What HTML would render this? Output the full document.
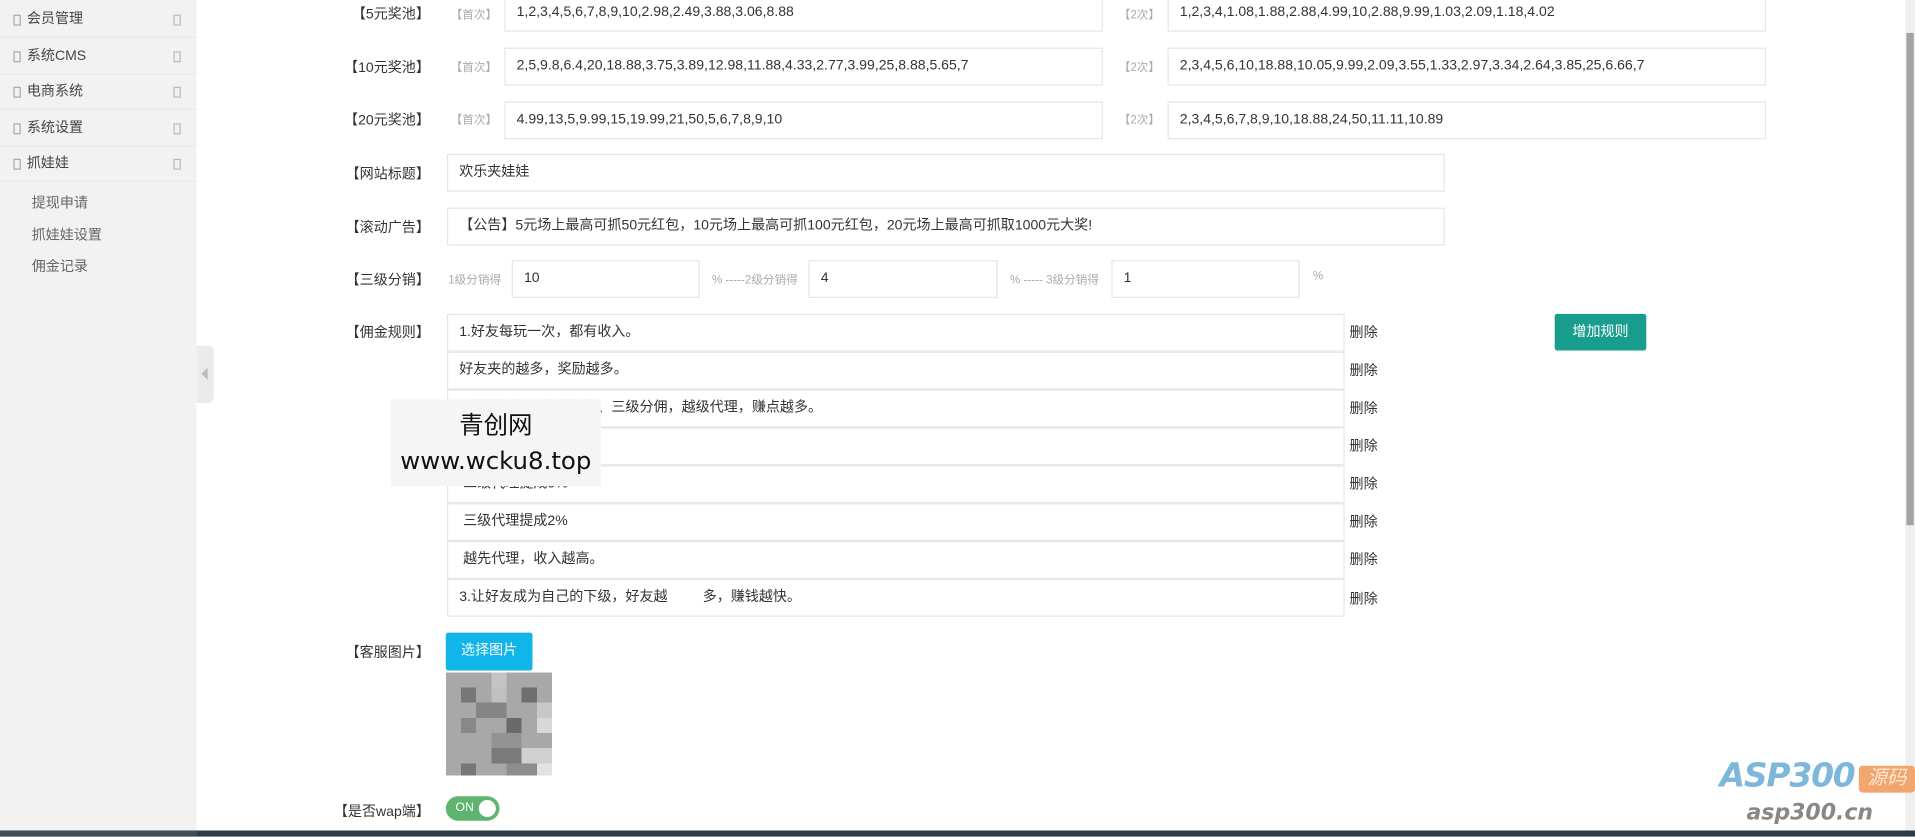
<!DOCTYPE html>
<html><head><meta charset="utf-8"><style>
*{margin:0;padding:0;box-sizing:border-box}
html,body{width:1915px;height:836px;overflow:hidden;background:#fff}
#w{position:absolute;left:0;top:0;width:1568px;height:685px;transform:scale(1.22130);transform-origin:0 0;font-family:"Liberation Sans","Noto Sans CJK SC",sans-serif;font-size:11.5px;color:#333}
.a{position:absolute}
.side{left:0;top:0;width:161px;height:685px;background:#f2f2f2}
.mi{position:absolute;left:0;width:161px;height:29px;border-bottom:1px solid #e9e9e9;line-height:29px}
.mi .ic{position:absolute;left:11px;top:10px;width:6px;height:9px;border:1px solid #aaa}
.mi .ir{position:absolute;left:142px;top:10px;width:6px;height:9px;border:1px solid #bbb}
.mi span{position:absolute;left:22px;color:#444}
.sub{position:absolute;left:26px;color:#666}
.lb{position:absolute;width:120px;text-align:right}
.in{position:absolute;border:1px solid #e6e6e6;height:31px;line-height:29px;padding-left:9px;background:#fff;white-space:nowrap;overflow:hidden}
.sm{position:absolute;color:#aaa;font-size:9.5px}
.del{position:absolute;left:1105px}
</style></head><body><div id="w">
<div class="a side">
<div class="mi" style="top:2px"><i class="ic"></i><span>会员管理</span><i class="ir"></i></div>
<div class="mi" style="top:32px"><i class="ic"></i><span>系统CMS</span><i class="ir"></i></div>
<div class="mi" style="top:61px"><i class="ic"></i><span>电商系统</span><i class="ir"></i></div>
<div class="mi" style="top:91px"><i class="ic"></i><span>系统设置</span><i class="ir"></i></div>
<div class="mi" style="top:120px"><i class="ic"></i><span>抓娃娃</span><i class="ir"></i></div>
<div class="sub" style="top:158px">提现申请</div>
<div class="sub" style="top:184px">抓娃娃设置</div>
<div class="sub" style="top:210px">佣金记录</div>
</div>
<div class="a" style="left:161px;top:283px;width:14px;height:47px;background:#ebebeb;border-radius:0 4px 4px 0"><div class="a" style="left:4px;top:18px;border-right:5px solid #bbb;border-top:5px solid transparent;border-bottom:5px solid transparent"></div></div>

<div class="lb" style="left:232px;top:3px">【5元奖池】</div>
<div class="sm" style="left:369px;top:4px">【首次】</div>
<div class="in" style="left:413px;top:-5px;width:490px">1,2,3,4,5,6,7,8,9,10,2.98,2.49,3.88,3.06,8.88</div>
<div class="sm" style="left:916px;top:4px">【2次】</div>
<div class="in" style="left:956px;top:-5px;width:490px">1,2,3,4,1.08,1.88,2.88,4.99,10,2.88,9.99,1.03,2.09,1.18,4.02</div>

<div class="lb" style="left:232px;top:47px">【10元奖池】</div>
<div class="sm" style="left:369px;top:47px">【首次】</div>
<div class="in" style="left:413px;top:39px;width:490px">2,5,9.8,6.4,20,18.88,3.75,3.89,12.98,11.88,4.33,2.77,3.99,25,8.88,5.65,7</div>
<div class="sm" style="left:916px;top:47px">【2次】</div>
<div class="in" style="left:956px;top:39px;width:490px">2,3,4,5,6,10,18.88,10.05,9.99,2.09,3.55,1.33,2.97,3.34,2.64,3.85,25,6.66,7</div>

<div class="lb" style="left:232px;top:90px">【20元奖池】</div>
<div class="sm" style="left:369px;top:90px">【首次】</div>
<div class="in" style="left:413px;top:83px;width:490px">4.99,13,5,9.99,15,19.99,21,50,5,6,7,8,9,10</div>
<div class="sm" style="left:916px;top:90px">【2次】</div>
<div class="in" style="left:956px;top:83px;width:490px">2,3,4,5,6,7,8,9,10,18.88,24,50,11.11,10.89</div>

<div class="lb" style="left:232px;top:134px">【网站标题】</div>
<div class="in" style="left:366px;top:126px;width:817px">欢乐夹娃娃</div>
<div class="lb" style="left:232px;top:178px">【滚动广告】</div>
<div class="in" style="left:366px;top:170px;width:817px">【公告】5元场上最高可抓50元红包，10元场上最高可抓100元红包，20元场上最高可抓取1000元大奖!</div>

<div class="lb" style="left:232px;top:221px">【三级分销】</div>
<div class="sm" style="left:367px;top:221px">1级分销得</div>
<div class="in" style="left:419px;top:213px;width:154px">10</div>
<div class="sm" style="left:583px;top:221px">% -----2级分销得</div>
<div class="in" style="left:662px;top:213px;width:155px">4</div>
<div class="sm" style="left:827px;top:221px">% ----- 3级分销得</div>
<div class="in" style="left:910px;top:213px;width:154px">1</div>
<div class="sm" style="left:1075px;top:221px">%</div>

<div class="lb" style="left:232px;top:264px">【佣金规则】</div>
<div class="in" style="left:366px;top:257px;width:735px">1.好友每玩一次，都有收入。</div><div class="del" style="top:264px">删除</div>
<div class="in" style="left:366px;top:288px;width:735px">好友夹的越多，奖励越多。</div><div class="del" style="top:295px">删除</div>
<div class="in" style="left:366px;top:319px;width:735px">2.邀请好友、转发好友、三级分佣，越级代理，赚点越多。</div><div class="del" style="top:326px">删除</div>
<div class="in" style="left:366px;top:350px;width:735px">&nbsp;一级代理提成5%</div><div class="del" style="top:357px">删除</div>
<div class="in" style="left:366px;top:381px;width:735px">&nbsp;二级代理提成3%</div><div class="del" style="top:388px">删除</div>
<div class="in" style="left:366px;top:412px;width:735px">&nbsp;三级代理提成2%</div><div class="del" style="top:419px">删除</div>
<div class="in" style="left:366px;top:443px;width:735px">&nbsp;越先代理，收入越高。</div><div class="del" style="top:450px">删除</div>
<div class="in" style="left:366px;top:474px;width:735px">3.让好友成为自己的下级，好友越&nbsp;&nbsp;&nbsp;&nbsp;&nbsp;&nbsp;&nbsp;&nbsp;&nbsp;多，赚钱越快。</div><div class="del" style="top:482px">删除</div>
<div class="a" style="left:1273px;top:257px;width:75px;height:30px;background:#199e8d;border-radius:2px;color:#fff;text-align:center;line-height:30px">增加规则</div>

<div class="a" style="left:320px;top:327px;width:172px;height:71px;background:#f5f5f5;text-align:center;font-size:20px;color:#111;line-height:29px;padding-top:7px;font-family:'DejaVu Sans','Noto Sans CJK SC',sans-serif">青创网<br>www.wcku8.top</div>

<div class="lb" style="left:232px;top:526px">【客服图片】</div>
<div class="a" style="left:365px;top:518px;width:71px;height:31px;background:#12b5e9;border-radius:2px;color:#fff;text-align:center;line-height:31px">选择图片</div>
<svg class="a" style="left:365px;top:550px" width="87" height="88" viewBox="0 0 7 7" shape-rendering="crispEdges">
<rect width="7" height="7" fill="#a8a8a8"/>
<rect x="1" y="1" width="1" height="1" fill="#777"/><rect x="3" y="0" width="1" height="1" fill="#c4c4c4"/><rect x="5" y="1" width="1" height="1" fill="#6e6e6e"/><rect x="3" y="1" width="1" height="1" fill="#c0c0c0"/>
<rect x="2" y="2" width="2" height="1" fill="#858585"/><rect x="6" y="2" width="1" height="1" fill="#c8c8c8"/><rect x="4" y="3" width="1" height="1" fill="#6a6a6a"/><rect x="1" y="3" width="1" height="1" fill="#888"/>
<rect x="6" y="3" width="1" height="1" fill="#d8d8d8"/><rect x="3" y="4" width="2" height="1" fill="#939393"/><rect x="3" y="5" width="2" height="1" fill="#7a7a7a"/><rect x="5" y="5" width="2" height="1" fill="#d0d0d0"/>
<rect x="1" y="6" width="1" height="1" fill="#777"/><rect x="4" y="6" width="2" height="1" fill="#8d8d8d"/><rect x="6" y="6" width="1" height="1" fill="#e2e2e2"/><rect x="0" y="6.8" width="7" height="0.2" fill="#fff"/>
</svg>

<div class="lb" style="left:232px;top:656px">【是否wap端】</div>
<div class="a" style="left:365px;top:652px;width:44px;height:20px;background:#5fb46f;border-radius:10px;color:#fff;font-size:10px;line-height:20px;padding-left:8px">ON<i class="a" style="left:27px;top:3px;width:14px;height:14px;background:#fff;border-radius:50%"></i></div>

<div class="a" style="left:1560px;top:0;width:8px;height:685px;background:#efefef"></div>
<div class="a" style="left:1561px;top:27px;width:6px;height:403px;background:#a3a3a3"></div>

<div class="a" style="left:1408px;top:620px;font:italic bold 27px 'DejaVu Sans',sans-serif;color:#7db8dc;letter-spacing:-1px">ASP300</div>
<div class="a" style="left:1522px;top:627px;width:46px;height:22px;background:#f2a56c;border-radius:3px;color:#fde7d6;font-size:16px;text-align:center;line-height:22px;font-style:italic">源码</div>
<div class="a" style="left:1430px;top:655px;font:italic bold 18px 'DejaVu Sans',sans-serif;color:#888">asp300.cn</div>

<div class="a" style="left:0;top:680px;width:1568px;height:5px;background:#2c3c49"></div>
<div class="a" style="left:0;top:680px;width:161px;height:5px;background:#3e4d57"></div>
</div></body></html>
